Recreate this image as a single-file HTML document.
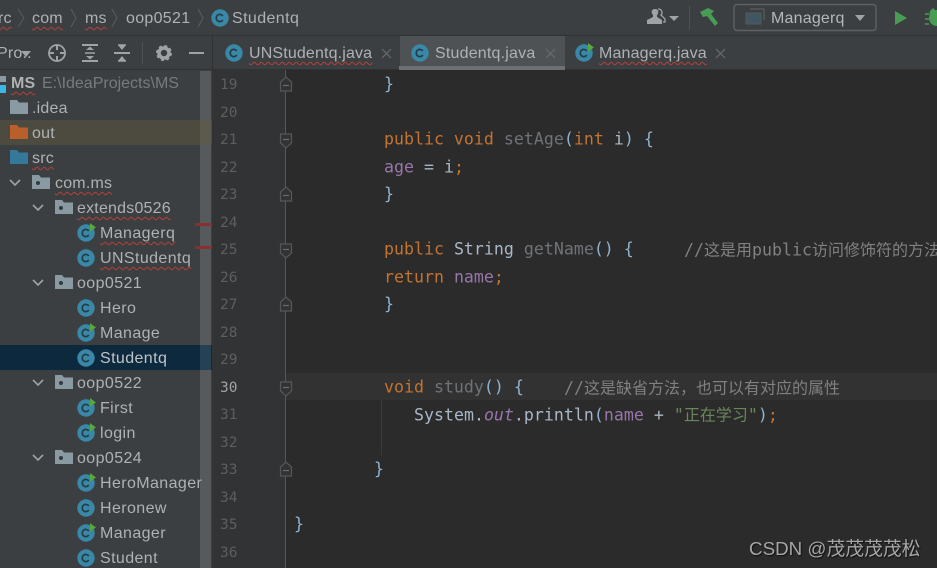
<!DOCTYPE html>
<html><head><meta charset="utf-8">
<style>
html,body{margin:0;padding:0;background:#2b2b2b}
#r{position:relative;width:937px;height:568px;overflow:hidden;background:#2b2b2b;font-family:"Liberation Sans","Noto Sans CJK SC",sans-serif}
.a{position:absolute}
.t{position:absolute;white-space:nowrap;color:#afb1b3;font-size:16px;line-height:20px;letter-spacing:.2px;transform:translateY(-9px)}
.l{letter-spacing:.4px}
.w{text-decoration:underline wavy #b5403c 1px;text-underline-offset:3px;text-decoration-skip-ink:none}
.c{position:absolute;white-space:pre;font-family:"DejaVu Sans Mono","Noto Sans CJK SC",monospace;font-size:16.6px;line-height:20px;color:#a9b7c6;transform:translateY(-9.500px)}
.n{position:absolute;left:220px;width:20px;font-family:"DejaVu Sans Mono",monospace;font-size:14.500px;line-height:20px;color:#5c5f61;transform:translateY(-9px)}
.k{color:#c27430}.u{color:#6f7377}.b{color:#8fb3cf}.p{color:#9876aa}.s{color:#6a8759}.g{color:#808080}
.cjk{font-family:"Noto Sans CJK SC",sans-serif;font-size:16px}
svg{position:absolute;overflow:visible}
</style></head><body><div id="r">
<svg width="0" height="0" style="left:0;top:0"><defs>
<g id="cl"><circle cx="9" cy="9" r="8.7" fill="#3a88a8"/><path d="M11.800 7A3.600 3.600 0 1 0 11.800 11" fill="none" stroke="#253c47" stroke-width="1.700"/></g>
<g id="cr"><circle cx="9" cy="9" r="8.7" fill="#3a88a8"/><path d="M11.800 7A3.600 3.600 0 1 0 11.800 11" fill="none" stroke="#253c47" stroke-width="1.700"/><path d="M13 -1L19 3.500L13 7.500Z" fill="#56a83a"/></g>
<g id="pk"><path d="M0 0H7L9 2.500H18V14H0Z" fill="#8a9aa3"/><circle cx="6" cy="8" r="2" fill="#35393b"/></g>
<path id="ch" d="M0 0L5 5L10 0" fill="none" stroke="#a0a3a5" stroke-width="1.600"/>
<g id="fu"><path d="M-5.500 7V-2L0 -7L5.500 -2V7Z" fill="#313335" stroke="#55585a" stroke-width="1.200"/><path d="M-3 1.500H3" stroke="#6a6d6f" stroke-width="1.200"/></g>
<g id="fd"><path d="M-5.500 -7V2L0 7L5.500 2V-7Z" fill="#313335" stroke="#55585a" stroke-width="1.200"/><path d="M-3 -1.500H3" stroke="#6a6d6f" stroke-width="1.200"/></g>
</defs></svg>

<!-- top bar -->
<div class="a" style="left:0;top:0;width:937px;height:35px;background:#3c3f41;border-bottom:1px solid #323232"></div>
<div class="t" style="left:-2px;top:18px"><span class="w">rc</span></div>
<div class="t w" style="left:32px;top:18px">com</div>
<div class="t w" style="left:85px;top:18px">ms</div>
<div class="t" style="left:126px;top:18px;letter-spacing:.3px">oop0521</div>
<div class="t" style="left:232px;top:18px;letter-spacing:.4px">Studentq</div>
<svg style="left:0;top:0" width="230" height="36"><g fill="none" stroke="#5a5d5f" stroke-width="1"><path d="M18 9L24 18L18 27M71 9L76 18L71 27M112 9L117 18L112 27M198 9L203 18L198 27"/></g></svg>
<svg style="left:211px;top:9px" width="18" height="18"><use href="#cl"/></svg>

<svg style="left:640px;top:0" width="297" height="36">
<path d="M7 24V20L13 17V15C11 13 11 9 15 9C19 9 19 13 17 15V17L22 20V24Z" fill="#a0a3a5"/>
<path d="M18 9C22 9 23 13 21 15L25 19V22H23" fill="none" stroke="#a0a3a5" stroke-width="1.300"/>
<path d="M29 16H39L34 21Z" fill="#a0a3a5"/>
<path d="M49.500 6V30" stroke="#4f5254" stroke-width="1"/>
<path d="M60 12L68 8L74 11L71 14L78 23L75 26L67 16L63 17Z" fill="#499c54"/>
<rect x="94" y="4.500" width="142" height="26" rx="3" fill="none" stroke="#5e6163" stroke-width="1.400"/>
<path d="M110 9H124V20" fill="none" stroke="#55585a" stroke-width="1.500"/>
<rect x="106" y="13" width="15" height="11" fill="#3f5663" stroke="#55585a"/>
<path d="M215 15H225L220 21Z" fill="#a0a3a5"/>
<path d="M255 11L267 18L255 25Z" fill="#499c54"/>
<path d="M290 11L293 8L295 10H297V26C292 26 289 22 289 18Z" fill="#499c54"/>
<path d="M285 14H289M285 19H289M285 24H289" stroke="#499c54" stroke-width="1.500"/>
</svg>
<div class="t" style="left:771px;top:18px;color:#b4b8bb">Managerq</div>

<!-- tabs row -->
<div class="a" style="left:0;top:36px;width:937px;height:33px;background:#3c3f41"></div>
<div class="a" style="left:0;top:69px;width:937px;height:1px;background:#323232"></div>
<div class="a" style="left:212px;top:36px;width:1px;height:33px;background:#323232"></div>
<div class="a" style="left:400px;top:36px;width:165px;height:33px;background:#4e5254"></div>
<div class="a" style="left:399px;top:66px;width:166px;height:4px;background:#6e7173"></div>

<div class="t" style="left:-3px;top:53px">Pro..</div>
<svg style="left:0;top:36px" width="212" height="33">
<path d="M21 15H31L26 21Z" fill="#a0a3a5"/>
<circle cx="57" cy="17" r="8" fill="none" stroke="#a0a3a5" stroke-width="1.800"/>
<path d="M57 9V14M57 20V25M49 17H54M60 17H65" stroke="#a0a3a5" stroke-width="2"/>
<path d="M82 9H98M82 25H98" stroke="#a0a3a5" stroke-width="2"/><path d="M86 14L90 10.500L94 14ZM86 20L90 23.500L94 20Z" fill="#a0a3a5"/><path d="M85 17H95" stroke="#a0a3a5" stroke-width="1.500"/>
<path d="M114 17H130" stroke="#a0a3a5" stroke-width="2"/><path d="M118 9L122 14L126 9ZM118 25L122 20L126 25Z" fill="#a0a3a5"/><path d="M118 9H126M118 25H126" stroke="#a0a3a5" stroke-width="1.500"/>
<path d="M142.500 6V28" stroke="#4f5254"/>
<circle cx="164" cy="17" r="5" fill="none" stroke="#a0a3a5" stroke-width="3.500"/>
<circle cx="164" cy="17" r="7" fill="none" stroke="#a0a3a5" stroke-width="2" stroke-dasharray="3 2.500"/>
<path d="M189 17H204" stroke="#a0a3a5" stroke-width="2"/>
</svg>

<!-- tabs -->
<svg style="left:225px;top:44px" width="18" height="18"><use href="#cl"/></svg>
<div class="t w" style="left:249px;top:53px;letter-spacing:.15px">UNStudentq.java</div>
<svg style="left:411px;top:44px" width="18" height="18"><use href="#cl"/></svg>
<div class="t" style="left:435px;top:53px;letter-spacing:.2px">Studentq.java</div>
<svg style="left:575px;top:44px" width="18" height="18"><use href="#cr"/></svg>
<div class="t w" style="left:599px;top:53px;letter-spacing:.15px">Managerq.java</div>
<svg style="left:0;top:36px" width="937" height="33"><g stroke="#696c6e" stroke-width="1.200"><path d="M382 13L391 22M391 13L382 22M546 13L555 22M555 13L546 22M716 13L725 22M725 13L716 22"/></g></svg>

<!-- sidebar -->
<div class="a" style="left:0;top:70px;width:212px;height:498px;background:#3c3f41"></div>
<div class="a" style="left:0;top:120px;width:212px;height:25px;background:#4d4a3f"></div>
<div class="a" style="left:0;top:345px;width:212px;height:25px;background:#0d293e"></div>
<div class="a" style="left:200px;top:71px;width:11px;height:497px;background:#575a5c"></div>
<div class="a" style="left:200px;top:120px;width:11px;height:25px;background:#5c594d"></div>
<div class="a" style="left:200px;top:345px;width:11px;height:25px;background:#264154"></div>
<div class="a" style="left:195px;top:223px;width:17px;height:3px;background:#8b3030"></div>
<div class="a" style="left:195px;top:246px;width:17px;height:3px;background:#8b3030"></div>

<svg style="left:0;top:76px" width="7" height="17"><rect width="6" height="6" fill="#8a9aa3"/><rect y="9" width="6" height="8" fill="#3db5e6"/></svg>
<div class="t" style="left:11px;top:83px;font-weight:bold"><span class="w">MS</span></div>
<div class="t" style="left:42px;top:83px;color:#787b7d;letter-spacing:0">E:\IdeaProjects\MS</div>

<svg style="left:10px;top:100px" width="18" height="16"><path d="M0 0H7L9 2.500H18V14H0Z" fill="#8a9aa3"/></svg>
<div class="t" style="left:32px;top:108px">.idea</div>
<svg style="left:10px;top:125px" width="18" height="16"><path d="M0 0H7L9 2.500H18V14H0Z" fill="#b85f2c"/></svg>
<div class="t" style="left:32px;top:133px">out</div>
<svg style="left:10px;top:150px" width="18" height="16"><path d="M0 0H7L9 2.500H18V14H0Z" fill="#34789a"/></svg>
<div class="t w" style="left:32px;top:158px">src</div>

<svg style="left:10px;top:180px" width="10" height="6"><use href="#ch"/></svg>
<svg style="left:32px;top:175px" width="18" height="16"><use href="#pk"/></svg>
<div class="t w" style="left:55px;top:183px">com.ms</div>

<svg style="left:33px;top:205px" width="10" height="6"><use href="#ch"/></svg>
<svg style="left:55px;top:200px" width="18" height="16"><use href="#pk"/></svg>
<div class="t w" style="left:77px;top:208px">extends0526</div>
<svg style="left:77px;top:224px" width="18" height="18"><use href="#cr"/></svg>
<div class="t w l" style="left:100px;top:233px">Managerq</div>
<svg style="left:77px;top:249px" width="18" height="18"><use href="#cl"/></svg>
<div class="t w l" style="left:100px;top:258px">UNStudentq</div>

<svg style="left:33px;top:280px" width="10" height="6"><use href="#ch"/></svg>
<svg style="left:55px;top:275px" width="18" height="16"><use href="#pk"/></svg>
<div class="t l" style="left:77px;top:283px">oop0521</div>
<svg style="left:77px;top:299px" width="18" height="18"><use href="#cl"/></svg>
<div class="t l" style="left:100px;top:308px">Hero</div>
<svg style="left:77px;top:324px" width="18" height="18"><use href="#cr"/></svg>
<div class="t l" style="left:100px;top:333px">Manage</div>
<svg style="left:77px;top:349px" width="18" height="18"><use href="#cl"/></svg>
<div class="t l" style="left:100px;top:358px;color:#c0c4c8">Studentq</div>

<svg style="left:33px;top:380px" width="10" height="6"><use href="#ch"/></svg>
<svg style="left:55px;top:375px" width="18" height="16"><use href="#pk"/></svg>
<div class="t l" style="left:77px;top:383px">oop0522</div>
<svg style="left:77px;top:399px" width="18" height="18"><use href="#cr"/></svg>
<div class="t l" style="left:100px;top:408px">First</div>
<svg style="left:77px;top:424px" width="18" height="18"><use href="#cr"/></svg>
<div class="t l" style="left:100px;top:433px">login</div>

<svg style="left:33px;top:455px" width="10" height="6"><use href="#ch"/></svg>
<svg style="left:55px;top:450px" width="18" height="16"><use href="#pk"/></svg>
<div class="t l" style="left:77px;top:458px">oop0524</div>
<svg style="left:77px;top:474px" width="18" height="18"><use href="#cr"/></svg>
<div class="t l" style="left:100px;top:483px">HeroManager</div>
<svg style="left:77px;top:499px" width="18" height="18"><use href="#cl"/></svg>
<div class="t l" style="left:100px;top:508px">Heronew</div>
<svg style="left:77px;top:524px" width="18" height="18"><use href="#cr"/></svg>
<div class="t l" style="left:100px;top:533px">Manager</div>
<svg style="left:77px;top:549px" width="18" height="18"><use href="#cl"/></svg>
<div class="t l" style="left:100px;top:558px">Student</div>

<!-- gutter -->
<div class="a" style="left:212px;top:70px;width:73px;height:498px;background:#313335"></div>
<div class="a" style="left:285px;top:70px;width:652px;height:498px;background:#2b2b2b"></div>
<div class="a" style="left:285px;top:373px;width:652px;height:27px;background:#323232"></div>
<div class="a" style="left:285px;top:70px;width:1px;height:498px;background:#55585a"></div>
<div class="a" style="left:381px;top:400px;width:1px;height:55px;background:#3b3b3b"></div>

<svg style="left:286px;top:0" width="1" height="568">
<use href="#fu" y="84"/><use href="#fd" y="141"/><use href="#fu" y="194"/><use href="#fd" y="251"/><use href="#fu" y="304"/><use href="#fd" y="389"/><use href="#fu" y="469"/>
</svg>

<div class="n" style="top:84px">19</div>
<div class="n" style="top:112px">20</div>
<div class="n" style="top:139px">21</div>
<div class="n" style="top:167px">22</div>
<div class="n" style="top:194px">23</div>
<div class="n" style="top:222px">24</div>
<div class="n" style="top:249px">25</div>
<div class="n" style="top:277px">26</div>
<div class="n" style="top:304px">27</div>
<div class="n" style="top:332px">28</div>
<div class="n" style="top:359px">29</div>
<div class="n" style="top:387px;color:#a4a3a3">30</div>
<div class="n" style="top:414px">31</div>
<div class="n" style="top:442px">32</div>
<div class="n" style="top:469px">33</div>
<div class="n" style="top:497px">34</div>
<div class="n" style="top:524px">35</div>
<div class="n" style="top:552px">36</div>

<!-- code -->
<div class="c" style="left:384px;top:84px"><span class="b">}</span></div>
<div class="c" style="left:384px;top:139px"><span class="k">public void </span><span class="u">setAge</span><span class="b">(</span><span class="k">int </span>i<span class="b">)</span> <span class="b">{</span></div>
<div class="c" style="left:384px;top:167px"><span class="p">age</span> = i<span class="k">;</span></div>
<div class="c" style="left:384px;top:194px"><span class="b">}</span></div>
<div class="c" style="left:384px;top:249px"><span class="k">public </span>String <span class="u">getName</span><span class="b">()</span> <span class="b">{</span></div>
<div class="c" style="left:684px;top:248px;color:#808080">//<span class="cjk">这是用</span>public<span class="cjk">访问修饰符的方法</span></div>
<div class="c" style="left:384px;top:277px"><span class="k">return </span><span class="p">name</span><span class="k">;</span></div>
<div class="c" style="left:384px;top:304px"><span class="b">}</span></div>
<div class="c" style="left:384px;top:387px"><span class="k">void </span><span class="u">study</span><span class="b">()</span> <span class="b">{</span></div>
<div class="c" style="left:564px;top:386px;color:#808080">//<span class="cjk">这是缺省方法，也可以有对应的属性</span></div>
<div class="c" style="left:414px;top:413px">System.<span class="p"><i>out</i></span>.println<span class="b">(</span><span class="p">name</span> + <span class="s">"<span class="cjk">正在学习</span>"</span><span class="b">)</span><span class="k">;</span></div>
<div class="c" style="left:374px;top:469px"><span class="b">}</span></div>
<div class="c" style="left:294px;top:524px"><span class="b">}</span></div>

<div class="t" style="left:749px;top:549px;font-size:18.800px;line-height:24px;letter-spacing:0;transform:translateY(-12px);color:#a6a6a6;text-shadow:1px 1px 1px #111">CSDN @茂茂茂茂松</div>
</div></body></html>
